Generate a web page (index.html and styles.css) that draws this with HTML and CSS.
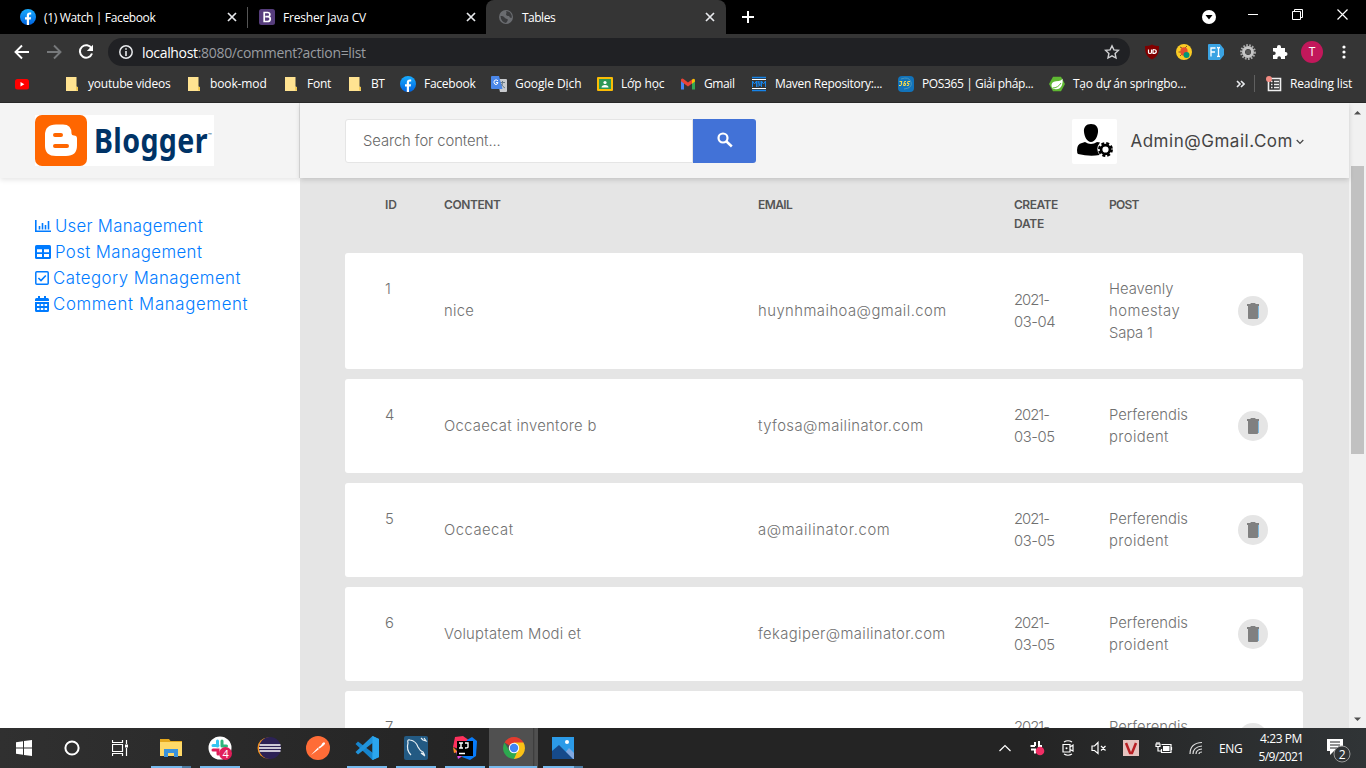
FILE: index.html
```
<!DOCTYPE html>
<html lang="en">
<head>
<meta charset="utf-8">
<title>Tables</title>
<link rel="stylesheet" href="styles.css">
</head>
<body>
<svg class="defs" width="0" height="0">
  <symbol id="fb" viewBox="0 0 16 16"><linearGradient id="fbg" x2="0" y2="1"><stop stop-color="#18acfe"/><stop offset="1" stop-color="#0163e0"/></linearGradient><circle cx="8" cy="8" r="8" fill="url(#fbg)"/><path d="M6.8 16v-5.4H5V8.2h1.8V6.7c0-2.3 1.1-3.3 2.9-3.3.7 0 1.1.1 1.5.1v2h-1c-.9 0-1.2.5-1.2 1.3v1.4h2.1l-.4 2.4H9V16z" fill="#fff"/></symbol>
  <symbol id="close" viewBox="0 0 10 10"><path d="M1 1l8 8M9 1L1 9" stroke="#e8eaed" stroke-width="1.7"/></symbol>
  <symbol id="folder" viewBox="0 0 16 16"><path d="M2 1h10.500v9.500l1.500.5v4H2z" fill="#ffe391"/><path d="M2 14.500h12V11h-1.800v3.500" fill="#f0c54c"/></symbol>
  <symbol id="trash" viewBox="0 0 12 16"><path d="M0 1h3.200l.8-1h4l.8 1H12v2H0zM1 3h10v12.200q0 .8-1 .8H2q-1 0-1-.8z" fill="#808080"/><path d="M11.500 3v12" stroke="#80b9dd" stroke-width="1"/></symbol>
</svg>

<div class="tabs">
  <div class="tab"><svg class="i16"><use href="#fb"/></svg><span class="tl" data-w="111">(1) Watch | Facebook</span><svg class="x"><use href="#close"/></svg></div>
  <div class="tab second"><svg class="i16" viewBox="0 0 16 16"><rect width="16" height="16" rx="2.500" fill="#563d7c"/><path d="M5.200 3.500h3.400c2.900 0 2.900 3.600.7 4.200 2.800.5 2.600 4.800-.8 4.800H5.200zM6.300 7.700h3" fill="none" stroke="#fff" stroke-width="1.700"/></svg><span class="tl" data-w="83">Fresher Java CV</span><svg class="x"><use href="#close"/></svg></div>
  <div class="tab active"><svg class="i16" viewBox="0 0 16 16"><circle cx="8" cy="8" r="7" fill="#6a6c70"/><path d="M2.500 7Q5 6.500 6 8t3 2-1 4Q3 13 2.500 7zM8 2q4 0 5.500 4 .5 2 0 3-2 0-2.500-2-3 0-3-2 1-1 0-3z" fill="#3a3b3d"/></svg><span class="tl" data-w="33">Tables</span><svg class="x"><use href="#close"/></svg></div>
  <svg class="plus" viewBox="0 0 12 12"><path d="M6 0v12M0 6h12" stroke="#fff" stroke-width="2"/></svg>
  <div class="wins">
    <svg width="14" height="14" viewBox="0 0 14 14"><circle cx="7" cy="7" r="7" fill="#fff"/><path d="M3.500 5h7L7 9.500z"/></svg>
    <svg width="10" height="10" viewBox="0 0 10 10"><path d="M0 5.500h10" stroke="#fff"/></svg>
    <svg width="11" height="11" viewBox="0 0 11 11"><path d="M.5 2.500h8v8h-8zM2.500 2.500v-2h8v8h-2" fill="none" stroke="#fff"/></svg>
    <svg width="11" height="11" viewBox="0 0 11 11"><path d="M.5.5l10 10M10.500.5l-10 10" stroke="#fff" stroke-width="1.200"/></svg>
  </div>
</div>

<div class="toolbar">
  <div class="nav">
    <svg class="i16" viewBox="0 0 16 16"><path d="M15 8H2M8 1.500L1.500 8 8 14.500" fill="none" stroke="#fff" stroke-width="1.900"/></svg>
    <svg class="i16" viewBox="0 0 16 16"><path d="M1 8h13M8 1.500L14.500 8 8 14.500" fill="none" stroke="#77797b" stroke-width="1.900"/></svg>
    <svg class="i16" viewBox="0 0 16 16"><path d="M13.600 4.500A6.200 6.200 0 1 0 14 9.500" fill="none" stroke="#fff" stroke-width="2"/><path d="M15 .8v6.200H8.800z" fill="#fff"/></svg>
  </div>
  <div class="omni">
    <svg width="14" height="14" viewBox="0 0 14 14"><circle cx="7" cy="7" r="6.200" fill="none" stroke="#e8eaed" stroke-width="1.500"/><path d="M7 3.200v1.600M7 6v5" stroke="#e8eaed" stroke-width="1.600"/></svg>
    <span class="url" data-w="224"><b>localhost</b>:8080/comment?action=list</span>
    <svg class="star" viewBox="0 0 16 16"><path d="M8 1.800l1.900 4.100 4.500.5-3.300 3.100.9 4.500L8 11.800 4 14l.9-4.500L1.600 6.400l4.500-.5z" fill="none" stroke="#d0d1d3" stroke-width="1.400"/></svg>
  </div>
  <div class="exts">
    <svg class="i16" viewBox="0 0 16 16"><path d="M8 .5C10 2 13 2 15 2c0 7-1 10-7 13.500C2 12 1 9 1 2c2 0 5 0 7-1.500z" fill="#800000"/><path d="M4.500 5.500v3q0 1 1.500 1t1.500-1v-3M9 5.500v4q3.300 0 3.300-2T9 5.500" fill="none" stroke="#fff" stroke-width="1.200"/></svg>
    <svg class="i16" viewBox="0 0 16 16"><circle cx="8" cy="8" r="8" fill="#fbcb24"/><path d="M4 3l2 1M11 2L9 4M2.500 8h3M4 12l2-2" stroke="#8a5228"/><ellipse cx="8" cy="7.500" rx="3.600" ry="4.200" fill="#e4502f"/><circle cx="10.500" cy="11" r="3" fill="#009578"/></svg>
    <svg class="i16" viewBox="0 0 16 16"><path d="M1 0h11l4 5v6l-4 5H1q-1 0-1-1V1q0-1 1-1z" fill="#3aa3e3"/><path d="M3 12.500V4h4.500M3 8h4M9 3.500q1.500 0 1.500 1v7q0 1-1.500 1M12 3.500q-1.500 0-1.500 1v7q0 1 1.500 1" fill="none" stroke="#fff" stroke-width="1.300"/></svg>
    <svg class="i16" viewBox="0 0 16 16"><circle cx="8" cy="8" r="6.800" fill="none" stroke="#aaa" stroke-width="2.200" stroke-dasharray="1.700 1.300"/><circle cx="8" cy="8" r="4.500" fill="none" stroke="#c5c5c5" stroke-width="3"/><circle cx="8" cy="8" r="2.500" fill="#555"/></svg>
    <svg class="i16" viewBox="0 0 16 16"><path d="M1 4h4V3a2 2 0 0 1 4 0v1h4v4h.5a2 2 0 0 1 0 4H13v3H9v-1a1.800 1.800 0 0 0-3.600 0v1H1v-4h1a1.700 1.700 0 0 0 0-3.400H1z" fill="#fff"/></svg>
    <span class="avatar">T</span>
    <svg class="i16 more" viewBox="0 0 16 16"><circle cx="8" cy="3" r="1.600" fill="#fff"/><circle cx="8" cy="8" r="1.600" fill="#fff"/><circle cx="8" cy="13" r="1.600" fill="#fff"/></svg>
  </div>
</div>

<div class="marks">
  <div class="m w50"><svg class="i16" viewBox="0 0 16 16"><rect x="1" y="3" width="14" height="10.500" rx="2.500" fill="#f00"/><path d="M6.500 6v4.500L10.300 8.200z" fill="#fff"/></svg></div>
  <div class="m w122"><svg class="i16"><use href="#folder"/></svg><span data-w="82">youtube videos</span></div>
  <div class="m w97"><svg class="i16"><use href="#folder"/></svg><span data-w="57">book-mod</span></div>
  <div class="m w64"><svg class="i16"><use href="#folder"/></svg><span data-w="24">Font</span></div>
  <div class="m w53"><svg class="i16"><use href="#folder"/></svg><span data-w="13">BT</span></div>
  <div class="m w91"><svg class="i16"><use href="#fb"/></svg><span data-w="51">Facebook</span></div>
  <div class="m w106"><svg class="i16" viewBox="0 0 16 16"><path d="M6 3h9q1 0 1 1v11q0 1-1 1H9z" fill="#c8cacd"/><path d="M9 6.500h5M11.500 5v1.500q0 4-2.500 5M10 8q2 3 4 4" stroke="#667986" fill="none"/><path d="M1 0h7l3.500 13H1q-1 0-1-1V1q0-1 1-1z" fill="#4b87e9"/><path d="M7 4.800Q5 3 3.500 4.500T4 8.300Q6.500 9.200 7 6.500H5" fill="none" stroke="#fff"/></svg><span data-w="66">Google Dịch</span></div>
  <div class="m w83"><svg class="i16" viewBox="0 0 16 16"><rect y="1" width="16" height="14" rx="1" fill="#fbbc05"/><rect x="2" y="3" width="12" height="10" fill="#2f9855"/><circle cx="8" cy="6.500" r="1.600" fill="#fff"/><path d="M4.500 11.500q0-2.500 3.500-2.500t3.500 2.500z" fill="#fff"/></svg><span data-w="43">Lớp học</span></div>
  <div class="m w71"><svg class="i16" viewBox="0 0 16 16"><path d="M1 13.500v-9L4 7v6.500z" fill="#4285f4"/><path d="M15 13.500v-9L12 7v6.500z" fill="#34a853"/><path d="M1 3.500Q2 2 3.500 3L8 6.500 12 3.500v4L8 10.500 1 5.200z" fill="#ea4335"/><path d="M12 3.500q3-2 3 1v1L12 7.700z" fill="#fbbc05"/></svg><span data-w="31">Gmail</span></div>
  <div class="m w147"><svg class="i16" viewBox="0 0 16 16"><path d="M1 1.500h14M1 14.500h14" stroke="#1683e8" stroke-width="1.500"/><path d="M1 3.500h14M1 12.500h14" stroke="#fff"/><path d="M1.500 11V5l2 3 2-3v6M7 11V5l2 5V5M10.500 11V5l2 3 2-3v6" fill="none" stroke="#1683e8"/></svg><span data-w="107">Maven Repository:...</span></div>
  <div class="m w151"><svg class="i16" viewBox="0 0 16 16"><rect width="16" height="16" rx="4" fill="#1273ba"/><path d="M3 3q8-3 10 3t-7 7" stroke="#4a96bb" fill="none"/><path d="M1.500 5.500h2.500L3 7.500h.8L3 9.500H1M8 5.500H6.500L5.500 9.500h1.800l.4-2H6M12 5.500H9.800L9.400 7.500H11l-.5 2H8.800" fill="none" stroke="#f8dc4a"/></svg><span data-w="111">POS365 | Giải pháp...</span></div>
  <div class="m w188"><svg class="i16" viewBox="0 0 16 16"><path d="M4 .8h8l4 7.200-4 7.200H4L0 8z" fill="#5fb832"/><path d="M13.500 2.500Q13 5 7 5.200 2 6 2.500 10q.3 2 1.500 2.800Q11 14.500 13 9q1-3 .5-6.500z" fill="#fff"/><path d="M3.500 12Q9 12 12 7" fill="none" stroke="#5fb832"/></svg><span data-w="113">Tạo dự án springbo...</span></div>
  <svg class="chev" viewBox="0 0 9 8"><path d="M1 1l3 3-3 3M5 1l3 3-3 3" fill="none" stroke="#e8eaed" stroke-width="1.600"/></svg>
  <div class="m read"><svg class="i16" viewBox="0 0 16 16"><path d="M2.500 2.500h12v12h-12z" fill="none" stroke="#eee" stroke-width="1.600"/><path d="M5 5.500h1.500M5 8.500h1.500M5 11.500h1.500M8 5.500h5M8 8.500h5M8 11.500h5" stroke="#eee" stroke-width="1.500"/><circle cx="3" cy="3" r="3" fill="#f28b82"/></svg><span data-w="62">Reading list</span></div>
</div>

<div class="view">
  <aside class="side">
    <div class="brand"><div class="logo">
      <svg width="52" height="51" viewBox="0 0 52 51"><rect width="52" height="51" rx="7" fill="#f60"/><path d="M21 9.500h7q8.500 0 8.500 9 0 2 2.500 2 3 0 3 3v7Q42 41 31 41H21Q10 41 10 31V20Q10 9.500 21 9.500z" fill="#fff"/><path d="M20 20h6M20 31h12" stroke="#f60" stroke-width="4" stroke-linecap="round"/></svg>
      <span class="wordbox"><span class="word" data-w="135">Blogger</span></span><span class="tm">™</span></div></div>
    <nav class="menu">
      <a><svg width="16" height="14" viewBox="0 0 16 14"><path d="M.8 1v11.200H16" fill="none" stroke="#007bff" stroke-width="1.600"/><path d="M4.500 7v3.500M7.500 4v6.500M10.500 6v4.500M13.500 2v8.500" stroke="#007bff" stroke-width="1.600"/></svg><span data-w="148">User Management</span></a>
      <a><svg width="16" height="14" viewBox="0 0 16 14"><rect width="16" height="14" rx="1.600" fill="#007bff"/><path d="M2 4.300h5v3H2zM9 4.300h5v3H9zM2 9h5v3H2zM9 9h5v3H9z" fill="#fff"/></svg><span data-w="147">Post Management</span></a>
      <a><svg width="14" height="14" viewBox="0 0 14 14"><rect x=".8" y=".8" width="12.400" height="12.400" rx="1" fill="none" stroke="#007bff" stroke-width="1.500"/><path d="M3.400 7l2.600 2.600L10.800 4.500" fill="none" stroke="#007bff" stroke-width="1.600"/></svg><span data-w="188">Category Management</span></a>
      <a><svg width="14" height="16" viewBox="0 0 14 16"><path d="M3 0h2v2h4V0h2v2h1.500Q14 2 14 3.500V5H0V3.500Q0 2 1.500 2H3zM0 6h14v8.500q0 1.500-1.500 1.500h-11Q0 16 0 14.500z" fill="#007bff"/><path d="M2 8h2.500v2H2zM5.800 8h2.500v2H5.800zM9.600 8h2.500v2H9.600zM2 12h2.500v2H2zM5.800 12h2.500v2H5.800zM9.600 12h2.500v2H9.600z" fill="#fff"/></svg><span data-w="195">Comment Management</span></a>
    </nav>
  </aside>
  <main class="main">
    <header class="head">
      <div class="search"><span class="field"><span data-w="138">Search for content...</span></span><span class="go"><svg width="16" height="16" viewBox="0 0 16 16"><circle cx="6" cy="6" r="4.500" fill="none" stroke="#fff" stroke-width="2.200"/><path d="M9 9l5.800 5.500" stroke="#fff" stroke-width="2.500"/></svg></span></div>
      <div class="user"><span class="pic"><svg width="45" height="45" viewBox="0 0 45 45"><path d="M19 5c5 0 7.500 3.500 7 8s-3 10-7 10-6.500-5.500-7-10 2-8 7-8zM13 23q6 4 12 0l3 .5q-5 6-.5 12.500Q18 38 6 35q-1-1-1-4 0-6 5-7z"/><circle cx="33.500" cy="30.500" r="6.200" fill="none" stroke="#000" stroke-width="2.500" stroke-dasharray="2.900 1.970"/><circle cx="33.500" cy="30.500" r="4.400" fill="none" stroke="#000" stroke-width="2.600"/></svg></span><span class="mail" data-w="163">Admin@Gmail.Com</span><svg width="8" height="6" viewBox="0 0 8 6"><path d="M.7 1L4 4.400 7.300 1" fill="none" stroke="#444" stroke-width="1.200"/></svg></div>
    </header>
    <div class="table">
      <div class="row th"><span><i data-w="12">ID</i></span><span><i data-w="56">CONTENT</i></span><span><i data-w="34">EMAIL</i></span><span><i data-w="44">CREATE</i><br><i data-w="30">DATE</i></span><span><i data-w="30">POST</i></span></div>
      <div class="row card"><span class="id">1</span><span><i data-w="30">nice</i></span><span><i data-w="189">huynhmaihoa@gmail.com</i></span><span><i data-w="35">2021-</i><br><i data-w="41">03-04</i></span><span><i data-w="65">Heavenly</i><br><i data-w="71">homestay</i><br><i data-w="44">Sapa 1</i></span><span class="del"><svg width="12" height="16"><use href="#trash"/></svg></span></div>
      <div class="row card"><span class="id">4</span><span><i data-w="153">Occaecat inventore b</i></span><span><i data-w="166">tyfosa@mailinator.com</i></span><span><i data-w="35">2021-</i><br><i data-w="41">03-05</i></span><span><i data-w="79">Perferendis</i><br><i data-w="60">proident</i></span><span class="del"><svg width="12" height="16"><use href="#trash"/></svg></span></div>
      <div class="row card"><span class="id">5</span><span><i data-w="70">Occaecat</i></span><span><i data-w="132">a@mailinator.com</i></span><span><i data-w="35">2021-</i><br><i data-w="41">03-05</i></span><span><i data-w="79">Perferendis</i><br><i data-w="60">proident</i></span><span class="del"><svg width="12" height="16"><use href="#trash"/></svg></span></div>
      <div class="row card"><span class="id">6</span><span><i data-w="137">Voluptatem Modi et</i></span><span><i data-w="188">fekagiper@mailinator.com</i></span><span><i data-w="35">2021-</i><br><i data-w="41">03-05</i></span><span><i data-w="79">Perferendis</i><br><i data-w="60">proident</i></span><span class="del"><svg width="12" height="16"><use href="#trash"/></svg></span></div>
      <div class="row card"><span class="id">7</span><span></span><span></span><span><i data-w="35">2021-</i><br><i data-w="41">03-05</i></span><span><i data-w="79">Perferendis</i><br><i data-w="60">proident</i></span><span class="del"><svg width="12" height="16"><use href="#trash"/></svg></span></div>
    </div>
  </main>
  <div class="scroll"><svg width="9" height="5" viewBox="0 0 9 5"><path d="M1 4.500h7L4.500 1z" fill="#505050"/></svg><div class="thumb"></div><svg class="down" width="9" height="5" viewBox="0 0 9 5"><path d="M1 .5h7L4.500 4z" fill="#505050"/></svg></div>
</div>

<div class="task">
  <div class="apps">
    <div class="app s"><svg width="16" height="16" viewBox="0 0 16 16"><path d="M0 2.300l7-1v6.200H0zM8 1.100L16 0v7.500H8zM0 8.500h7v6.200l-7-1zM8 8.500h8V16l-8-1.100z" fill="#fff"/></svg></div>
    <div class="app s"><svg width="16" height="16" viewBox="0 0 16 16"><circle cx="8" cy="8" r="6.600" fill="none" stroke="#fff" stroke-width="2"/></svg></div>
    <div class="app s"><svg width="16" height="16" viewBox="0 0 16 16"><path d="M.5 0v2.500h10V0M.5 4.500h10v7H.5zM.5 16v-2.500h10V16M14.500 0v4M14.500 8v8" fill="none" stroke="#fff" stroke-width="1.200"/><path d="M13 4.500h3v3h-3z" fill="#fff"/></svg></div>
    <div class="app run first"><svg width="22" height="20" viewBox="0 0 22 20"><path d="M0 1h9l1.500 2H22v15H0z" fill="#e5a81d"/><path d="M0 4h22v14H0z" fill="#ffd968"/><path d="M4 19v-8h14v8h-4v-4H8v4z" fill="#3b93dc"/></svg></div>
    <div class="app run"><svg width="24" height="24" viewBox="0 0 24 24"><circle cx="12" cy="12" r="11.500" fill="#fff"/><path d="M9.500 5v5M5 9.500h5" stroke="#36c5f0" stroke-width="3" stroke-linecap="round"/><path d="M14 5v5M14 10h4.500" stroke="#2eb67d" stroke-width="3" stroke-linecap="round"/><path d="M5 14h5v4" fill="none" stroke="#e01e5a" stroke-width="3" stroke-linecap="round"/><circle cx="17.500" cy="17.500" r="6.500" fill="#e01e5a"/><text x="14.500" y="21.500" fill="#fff" font-size="11" font-family="Open Sans">4</text></svg></div>
    <div class="app"><svg width="24" height="24" viewBox="0 0 24 24"><circle cx="11" cy="12" r="10.500" fill="#f7941e"/><circle cx="13" cy="12" r="11" fill="#2c2255"/><path d="M2.500 9h21M2 12h22M2.500 15h21" stroke="#fff" stroke-width="1.500"/></svg></div>
    <div class="app"><svg width="24" height="24" viewBox="0 0 24 24"><circle cx="12" cy="12" r="12" fill="#ff6c37"/><path d="M5 19l7-7.500 3-2q2-4 3.500-3t-1 3L13 13z" fill="#fff"/><path d="M11.500 11l2 2" stroke="#ff6c37"/></svg></div>
    <div class="app run"><svg width="24" height="24" viewBox="0 0 24 24"><path d="M18 7v10L3 5.500.5 8l17 16L24 21V3z" fill="#1685ce"/><path d="M17.500 0L24 3v18l-6.500 3V7L3 18.500.5 16z" fill="#2193da"/><path d="M17.500 0L24 3v18l-6.500 3z" fill="#2ba6ee"/></svg></div>
    <div class="app run"><svg width="24" height="24" viewBox="0 0 24 24"><rect width="24" height="24" rx="2" fill="#235a83"/><path d="M7 19Q2 14 4 7q-1-4 2-3 6 1 8 7 2 4 5 5l1 2-3-1 4 3M17 2l2 2 3 1-2-3" fill="none" stroke="#e9f0f4" stroke-width="1.200"/></svg></div>
    <div class="app run"><svg width="24" height="24" viewBox="0 0 24 24"><path d="M2 1L10 0l7 5-8 9-9-3z" fill="#fe315d"/><path d="M0 11l5 5-4 1z" fill="#ff8b24"/><path d="M14 4l5-3 5 4-1 15-6 4-8-3z" fill="#087cfa"/><path d="M3 15l8 4-6 4z" fill="#d94be5"/><path d="M4 5h16v15H4z"/><path d="M6 7h4M8 7v5M6 12h4M12 7h3v4q0 1-3 1M6 17.500h6" fill="none" stroke="#fff" stroke-width="1.400"/></svg></div>
    <div class="app run on"><svg width="22" height="22" viewBox="0 0 22 22"><path d="M11 11L1.500 5.500A11 11 0 0 1 20.500 5.500z" fill="#e33b2e"/><path d="M11 11V5.500h9.500A11 11 0 0 1 11 22z" fill="#fbc116"/><path d="M1.500 5.500l5 8.500 8 0L11 22A11 11 0 0 1 1.500 5.500z" fill="#2da94f"/><circle cx="11" cy="11" r="5.200" fill="#fff"/><circle cx="11" cy="11" r="4.200" fill="#4285f4"/></svg></div>
    <div class="app run last"><svg width="22" height="22" viewBox="0 0 22 22"><path d="M0 0h22v22H0z" fill="#2c9be8"/><path d="M12 17l5-6 5 5v6H9z" fill="#7fa8e0"/><path d="M0 14L7 8l14 14H0z" fill="#164a8a"/><circle cx="15" cy="5" r="2" fill="#fff"/></svg></div>
  </div>
  <div class="tray">
    <svg width="12" height="8" viewBox="0 0 12 8"><path d="M.5 7L6 1.500 11.500 7" fill="none" stroke="#fff" stroke-width="1.200"/></svg>
    <svg width="16" height="16" viewBox="0 0 16 16"><path d="M6 2v4M1.500 6H6M10 1v5h3M2 9.500h4v4M9 9h4" fill="none" stroke="#fff" stroke-width="2"/><circle cx="11" cy="11" r="4.300" fill="#f02e65"/></svg>
    <svg width="14" height="16" viewBox="0 0 14 16"><path d="M3 2q4-2.500 8 0M3 14q4 2.500 8 0M2 4.500h7v7.500H2zM9 7l3-2v6L9 9.500" fill="none" stroke="#fff" stroke-width="1.200"/><circle cx="5.500" cy="8.200" r="1" fill="#fff"/></svg>
    <svg width="16" height="14" viewBox="0 0 16 14"><path d="M1 5h2.500L7 1.500v11L3.500 9.500H1zM10 5l4.500 4.500M14.500 5L10 9.500" fill="none" stroke="#fff" stroke-width="1.200"/></svg>
    <svg width="16" height="16" viewBox="0 0 16 16"><path d="M0 0h16v16H0z" fill="#e6c3bf"/><path d="M3 3l4 10h2l4-10" fill="none" stroke="#b91f24" stroke-width="2.500"/></svg>
    <svg width="18" height="14" viewBox="0 0 18 14"><path d="M6.500 3.500H16v8H6.500V8M16.500 6v3M1 3h4v2.500H1zM2 1v2M4 1v2M3 6v4h3" fill="none" stroke="#fff" stroke-width="1.200"/><path d="M8 5h6.500v5H8z" fill="#fff"/></svg>
    <svg width="14" height="14" viewBox="0 0 14 14"><path d="M1 13Q1 2 13 1.500M4 13q0-7 9-8M7 13q0-4.500 6-5M10 13q0-2 3-2" fill="none" stroke="#ddd" stroke-width="1.200"/></svg>
    <span class="eng"><i data-w="23">ENG</i></span>
    <span class="clock"><i data-w="42">4:23 PM</i><br><i data-w="45">5/9/2021</i></span>
    <svg class="note" width="26" height="26" viewBox="0 0 26 26"><path d="M1 2h16v12H8l-4 4v-4H1z" fill="#fff"/><path d="M4 5h10M4 8h10M4 11h7" stroke="#252525"/><circle cx="16" cy="17" r="8" fill="#303335" stroke="#999"/><text x="12.800" y="21.500" fill="#fff" font-size="12" font-family="Open Sans">2</text></svg>
  </div>
</div>
<script src="fit.js"></script>
</body>
</html>
```
FILE: styles.css
```
* { box-sizing: border-box; }
body { margin: 0; width: 1366px; height: 768px; overflow: hidden; background: #fff; font: 12px "Open Sans", "Noto Sans", sans-serif; display: flex; flex-direction: column; }
i { font-style: normal; }
svg { flex: none; display: block; }
.defs { position: absolute; }
[data-w] { display: inline-block; white-space: nowrap; }
.i16 { width: 16px; height: 16px; }

.tabs { height: 34px; flex: none; background: #000; display: flex; color: #fff; align-items: stretch; }
.tab { display: flex; align-items: center; width: 247px; padding: 0 10px 0 20px; }
.tab .tl { margin-left: 8px; margin-right: auto; }
.x { width: 10px; height: 10px; }
.tab.second { width: 239px; padding: 0 10px 0 11px; border-left: 1px solid #444; border-image: linear-gradient(#000 8px, #555 8px, #555 27px, #000 27px) 1; }
.tab.active { width: 240px; padding: 0 11px 0 12px; background: #353535; border-radius: 8px 8px 0 0; }
.plus { width: 12px; height: 12px; margin: 11px 0 0 16px; }
.wins { margin-left: auto; display: flex; gap: 34px; padding: 9px 18px 0 0; }
.wins svg:first-child { margin: 1px -2px 0 0; }

.toolbar { height: 36px; flex: none; background: #353535; display: flex; align-items: center; }
.nav { display: flex; gap: 16px; padding-left: 14px; width: 108px; }
.omni { width: 1022px; height: 28px; border-radius: 14px; background: #202124; display: flex; align-items: center; padding: 0 10px 0 11px; color: #999ca0; font-size: 14px; }
.url { margin-left: 9px; }
.url b { font-weight: 400; color: #fff; }
.star { width: 16px; height: 16px; margin-left: auto; }
.exts { display: flex; align-items: center; gap: 16px; padding-left: 14px; }
.avatar { width: 22px; height: 22px; border-radius: 50%; background: #c2185b; color: #fff; text-align: center; line-height: 22px; margin-left: -3px; margin-right: -3px; }

.marks { height: 33px; flex: none; background: #353535; border-bottom: 1px solid #282828; display: flex; align-items: center; color: #fff; padding: 0 0 5px 14px; }
.m { display: flex; align-items: center; gap: 8px; flex: none; }
.w50 { width: 50px; } .w122 { width: 122px; } .w97 { width: 97px; } .w64 { width: 64px; } .w53 { width: 53px; } .w91 { width: 91px; } .w106 { width: 106px; } .w83 { width: 83px; } .w71 { width: 71px; } .w147 { width: 147px; } .w151 { width: 151px; } .w188 { width: 187px; }
.chev { width: 9px; height: 8px; }
.read { margin-left: 9px; border-left: 1px solid #606060; padding-left: 11px; }

.view { height: 625px; flex: none; display: flex; overflow: hidden; font-family: Inter, "Open Sans", sans-serif; }
.side { width: 300px; flex: none; background: #fff; }
.brand { height: 75px; background: #f4f4f4; box-shadow: 0 2px 5px rgba(0,0,0,.1); padding: 12px 0 0 35px; border-right: 1px solid #ddd; }
.logo { width: 179px; height: 51px; background: #fff; display: flex; }
.wordbox { width: 113px; margin-left: 7px; }
.word { font: bold 34px/50px "Noto Sans", sans-serif; color: #003366; transform: scaleX(.84); transform-origin: 0 0; }
.tm { font-size: 6px; line-height: 7px; color: #003366; margin: 17px 0 0 1px; width: 6px; }
.menu { padding: 35px 0 0 35px; }
.menu a { height: 26px; display: flex; align-items: center; gap: 4px; color: #007bff; font-size: 16.8px; font-weight: 300; padding-bottom: 1px; }

.main { width: 1049px; flex: none; background: #e5e5e5; }
.head { height: 75px; background: #f4f4f4; box-shadow: 0 2px 5px rgba(0,0,0,.15); position: relative; display: flex; justify-content: space-between; padding: 16px 45px 0; }
.search { display: flex; }
.field { width: 348px; height: 44px; background: #fff; border: 1px solid #e5e5e5; border-radius: 3px 0 0 3px; padding: 0 17px; line-height: 42px; font-size: 14.8px; font-weight: 300; color: #666; }
.go { width: 63px; height: 44px; background: #4272d7; border-radius: 0 3px 3px 0; display: flex; align-items: center; justify-content: center; padding-bottom: 2px; }
.user { display: flex; height: 45px; align-items: center; }
.pic { width: 45px; height: 45px; background: #fff; border-radius: 2px; margin-right: 13px; }
.mail { font-size: 17px; color: #444; margin-right: 3px; padding-bottom: 2px; }
.table { padding: 0 46px 0 45px; }
.row { display: grid; grid-template-columns: 59px 314px 256px 95px 129px 30px; padding: 25px 35px 25px 40px; line-height: 22px; font-size: 14.8px; font-weight: 300; color: #707070; align-items: center; }
.th { height: 75px; padding-top: 17px; padding-bottom: 0; align-items: start; line-height: 19px; font-size: 12px; font-weight: 600; color: #555; }
.card { background: #fff; border-radius: 3px; margin-bottom: 10px; }
.id { align-self: start; }
.del { width: 30px; height: 30px; border-radius: 50%; background: #e5e5e5; display: flex; align-items: center; justify-content: center; }
.scroll { width: 17px; background: #f1f1f1; display: flex; flex-direction: column; align-items: center; padding: 7px 0 6px; }
.thumb { width: 13px; height: 288px; margin-top: 51px; background: #c1c1c1; }
.down { margin-top: auto; }

.task { height: 40px; flex: none; background: linear-gradient(90deg, #303030, #242424 35%, #242424 75%, #303436); display: flex; color: #fff; justify-content: space-between; }
.apps { display: flex; }
.app { width: 49px; height: 40px; display: flex; align-items: center; justify-content: center; }
.app.s { width: 48px; }
.app.s + .first { margin-left: 2px; }
.run { background: linear-gradient(#76b9ed, #76b9ed) 50% 100% / 40px 2px no-repeat; }
.first, .last { background: linear-gradient(90deg, #76b9ed 31px, #4c7ba1 31px) 50% 100% / 40px 2px no-repeat; }
.on { background: linear-gradient(#76b9ed, #76b9ed) 0 100% / 48px 2px no-repeat, linear-gradient(90deg, #505050 44px, #383838 44px, #505050 46px); }
.tray { display: flex; align-items: center; width: 367px; }
.tray svg { margin-right: 16px; }
.tray svg:first-child { margin-right: 18px; }
.eng { width: 33px; }
.clock { width: 58px; text-align: center; line-height: 18px; }
.tray .note { margin: 4px 0 0 16px; }
```
FILE: fit.js
```
document.querySelectorAll('[data-w]').forEach(function (el) {
  var target = Number(el.dataset.w);
  var width = el.offsetWidth;
  el.style.letterSpacing = (target - width) / el.textContent.length + 'px';
});
```
